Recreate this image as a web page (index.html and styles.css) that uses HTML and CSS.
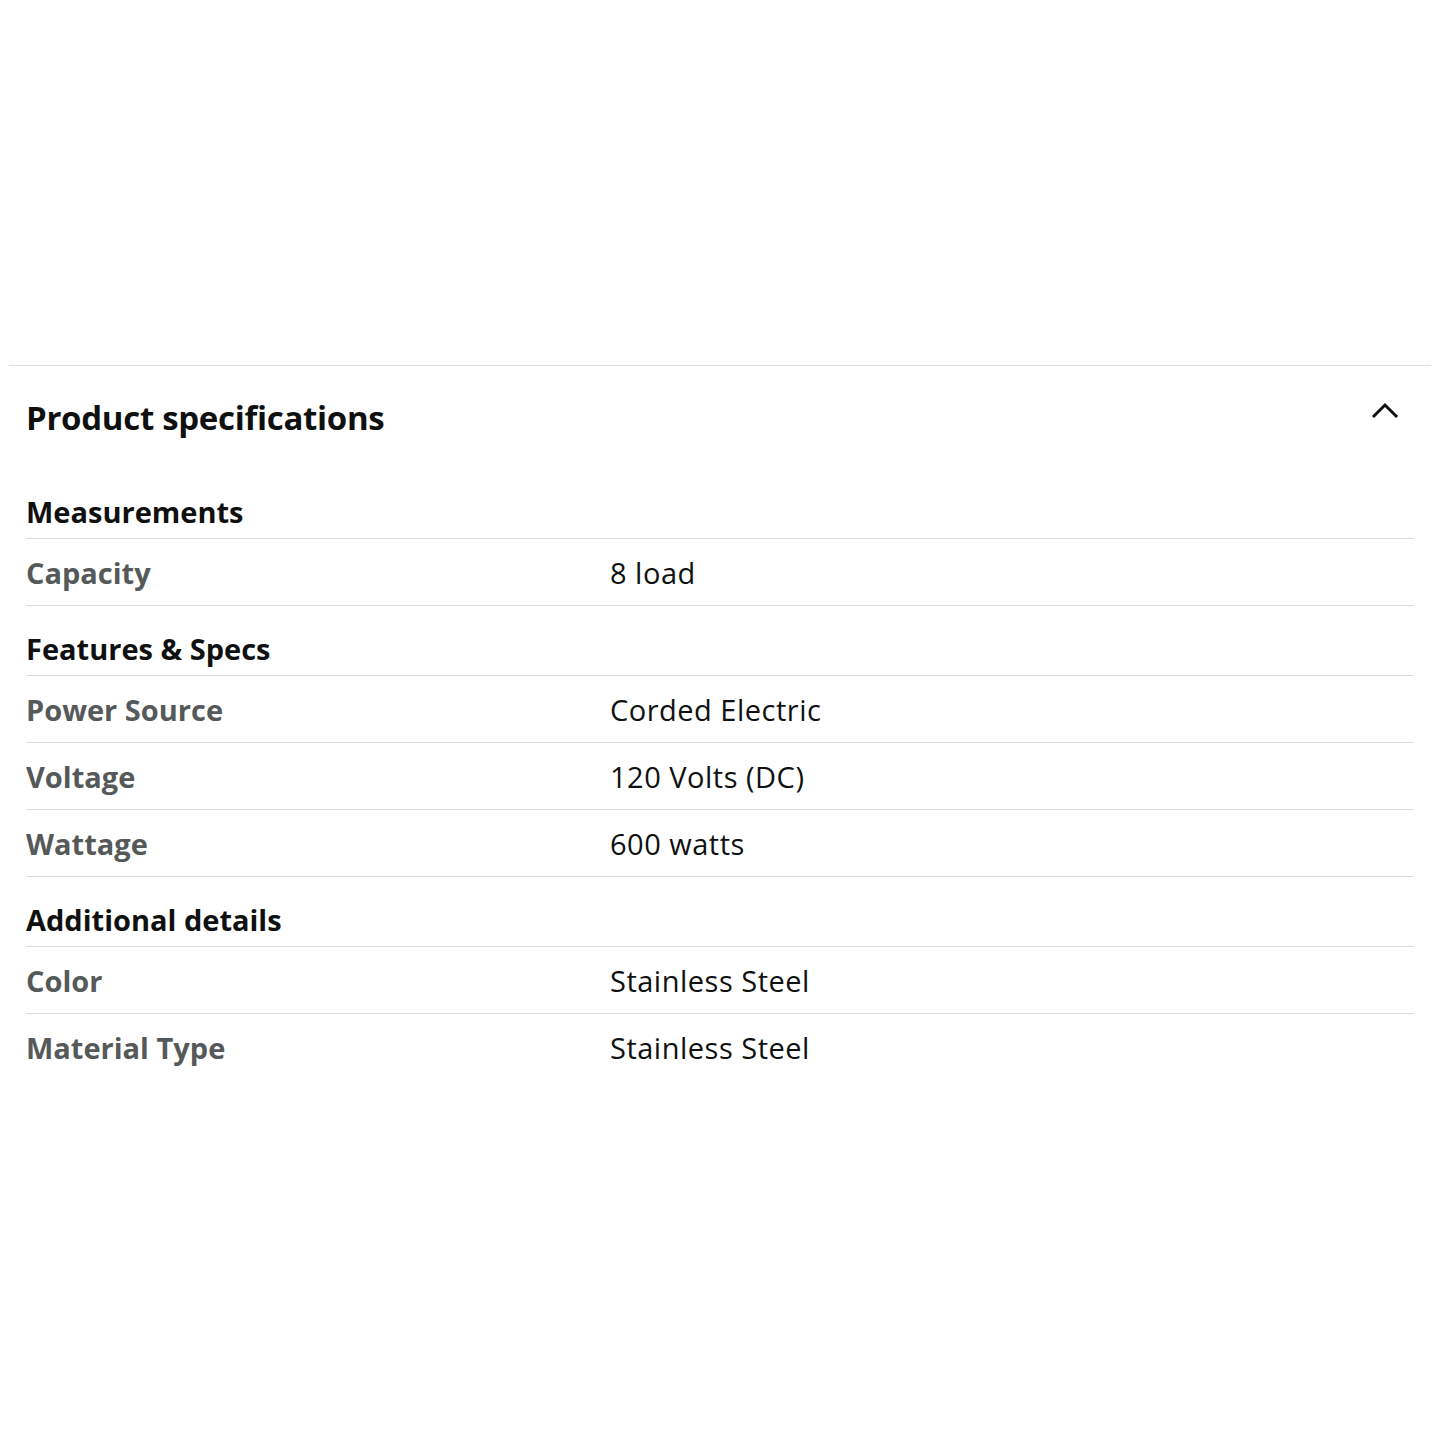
FILE: index.html
```html
<!DOCTYPE html>
<html>
<head>
<meta charset="utf-8">
<link rel="stylesheet" href="styles.css">
</head>
<body>
<div class="page">
  <section class="specs">
    <div class="specs-head">
      <h2 class="specs-title">Product specifications</h2>
      <svg class="chevron" width="28" height="20" viewBox="0 0 28 20"><path d="M3 16 L14 5 L25 16" fill="none" stroke="#0F1111" stroke-width="3" stroke-linecap="square"/></svg>
    </div>
    <div class="group">
      <h3 class="group-title first">Measurements</h3>
      <div class="row"><span class="label">Capacity</span><span class="value">8 load</span></div>
    </div>
    <div class="group">
      <h3 class="group-title">Features &amp; Specs</h3>
      <div class="row"><span class="label">Power Source</span><span class="value">Corded Electric</span></div>
      <div class="row"><span class="label">Voltage</span><span class="value">120 Volts (DC)</span></div>
      <div class="row"><span class="label">Wattage</span><span class="value">600 watts</span></div>
    </div>
    <div class="group">
      <h3 class="group-title">Additional details</h3>
      <div class="row"><span class="label">Color</span><span class="value">Stainless Steel</span></div>
      <div class="row last"><span class="label">Material Type</span><span class="value">Stainless Steel</span></div>
    </div>
  </section>
</div>
</body>
</html>
```
FILE: styles.css
```css
html, body { margin: 0; padding: 0; background: #fff; }
body { font-family: "Open Sans", "Noto Sans", sans-serif; color: #0F1111; }
.page { padding-top: 365px; margin: 0 9px; }
.specs { border-top: 1px solid #dcdcdc; padding: 0 17px 0 17px; }
.specs-head { display: flex; justify-content: space-between; align-items: flex-start; padding-top: 32px; }
.specs-title { margin: 0; font-size: 33px; line-height: 40px; font-weight: 700; letter-spacing: -0.3px; }
.chevron { margin-top: 2px; margin-right: 15px; }
.group-title { margin: 0; font-size: 29px; line-height: 34px; font-weight: 700; padding: 26px 0 9px; border-bottom: 1px solid #dcdcdc; }
.group-title.first { padding-top: 57px; }
.row { display: grid; grid-template-columns: 584px 1fr; height: 66px; align-items: center; border-bottom: 1px solid #dcdcdc; font-size: 29px; }
.row.last { border-bottom: none; }
.label { color: #565959; font-weight: 700; }
.value { color: #0F1111; letter-spacing: 0.5px; }
```
